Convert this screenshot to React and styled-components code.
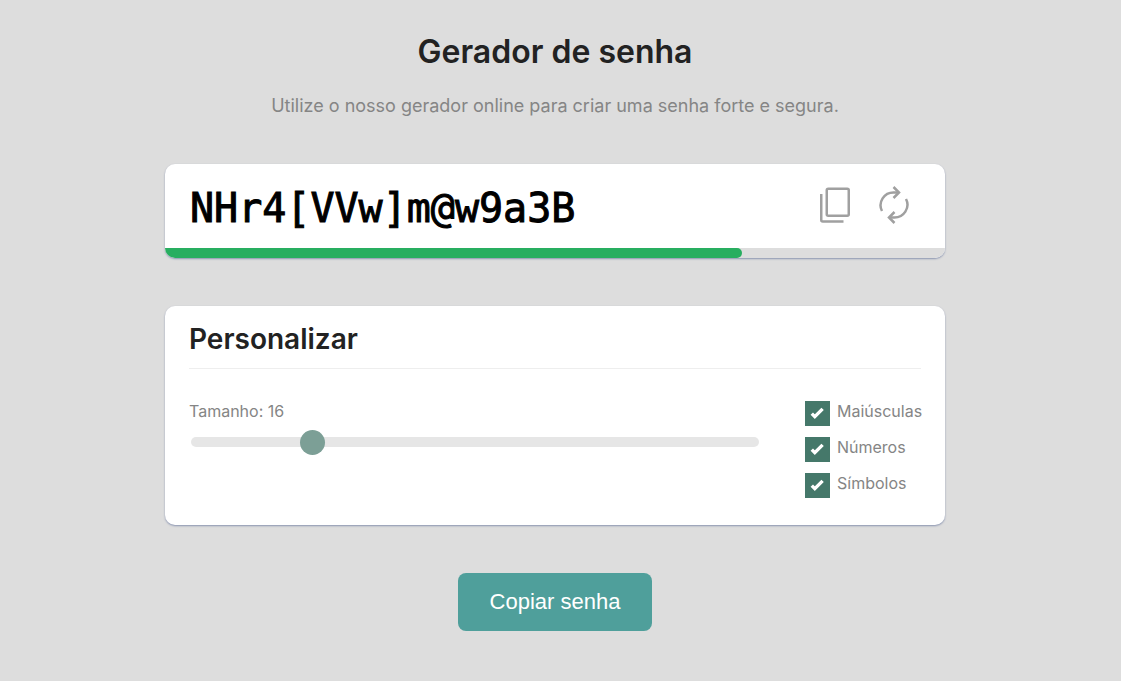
import React, { useState } from "react";
import styled, { createGlobalStyle } from "styled-components";

const GlobalStyle = createGlobalStyle`
  *, *::before, *::after { box-sizing: border-box; }
  body {
    margin: 0;
    background: #dddddd;
    color: #858585;
    font-family: Inter, "Liberation Sans", sans-serif;
  }
`;

const Page = styled.main`
  display: flex;
  flex-direction: column;
  align-items: center;
  padding: 32px 27px 48px 16px;
`;

const Title = styled.h1`
  margin: 0;
  color: #222222;
  font-size: 32px;
  font-weight: 600;
  line-height: 40px;
`;

const Subtitle = styled.p`
  margin: 22px 0 46px;
  font-size: 18px;
  line-height: 24px;
  text-align: center;
`;

const Card = styled.section`
  width: 100%;
  max-width: 780px;
  margin-bottom: 48px;
  overflow: hidden;
  border-radius: 10px;
  background: #ffffff;
  box-shadow: 0 1px 2px #8a94b0;
`;

const PasswordRow = styled.div`
  display: flex;
  align-items: center;
  height: 84px;
  padding: 0 31px 0 25px;
`;

const PasswordInput = styled.input`
  flex: 1;
  min-width: 0;
  padding: 3px 0 0;
  border: 0;
  outline: 0;
  background: transparent;
  color: #000000;
  font-family: "DejaVu Sans Mono", monospace;
  font-size: 40px;
  line-height: 48px;
  -webkit-text-stroke: 1px #000000;
`;

const Actions = styled.div`
  display: flex;
  gap: 19px;
`;

const IconButton = styled.button`
  display: grid;
  place-items: center;
  width: 40px;
  height: 46px;
  padding: 0 0 2px;
  border: 0;
  background: transparent;
  color: #a0a0a0;
  cursor: pointer;
`;

const Strength = styled.div`
  height: 10px;
  background: #dddddd;
`;

const StrengthFill = styled.div`
  height: 100%;
  border-radius: 0 5px 5px 0;
  background: #28ae60;
`;

const Settings = styled.div`
  padding: 16px 24px 27px;
`;

const SettingsTitle = styled.h2`
  margin: 0;
  padding-bottom: 12px;
  border-bottom: 1px solid #eeeeee;
  color: #222222;
  font-size: 28px;
  font-weight: 600;
  line-height: 34px;
`;

const Options = styled.div`
  display: flex;
  gap: 44px;
  padding-top: 32px;
`;

const LengthField = styled.div`
  flex: 1;
  display: flex;
  flex-direction: column;
  gap: 8px;
`;

const LengthLabel = styled.label`
  font-size: 16px;
  line-height: 20px;
`;

const Slider = styled.input`
  appearance: none;
  width: calc(100% - 4px);
  height: 10px;
  margin: 8px 2px;
  border-radius: 5px;
  outline: 0;
  background: #e6e6e6;

  &::-webkit-slider-thumb {
    appearance: none;
    width: 25px;
    height: 25px;
    border-radius: 50%;
    background: #7c9f96;
    cursor: pointer;
  }
`;

const CheckList = styled.div`
  flex: 0 0 116px;
  min-width: 0;
  display: flex;
  flex-direction: column;
  gap: 11px;
`;

const CheckLabel = styled.label`
  display: flex;
  gap: 7px;
  height: 25px;
  font-size: 16px;
  line-height: 20px;
  cursor: pointer;
`;

const CheckBox = styled.span`
  display: grid;
  flex-shrink: 0;
  width: 25px;
  height: 25px;

  & > * {
    grid-area: 1 / 1;
    place-self: center;
  }

  svg {
    pointer-events: none;
  }
`;

const CheckInput = styled.input`
  appearance: none;
  width: 25px;
  height: 25px;
  margin: 0;
  background: #eeeeee;

  &:checked {
    background: #45786a;
  }
`;

const CopyButton = styled.button`
  padding: 16px 32px;
  border: 0;
  border-radius: 8px;
  background: #4f9f9b;
  color: #ffffff;
  font-family: "Liberation Sans", Arial, sans-serif;
  font-size: 22px;
  line-height: 26px;
  cursor: pointer;
`;

const CopyIcon = () => (
  <svg width="30" height="36" viewBox="0 0 30 36" fill="none" stroke="currentColor" strokeWidth="2.5" aria-hidden="true">
    <rect x="6.75" y="1.75" width="22" height="27" rx="1.5" />
    <path d="M1.25 7V33Q1.25 34.5 2.75 34.5H23.5" />
  </svg>
);

const RefreshIcon = () => (
  <svg width="30" height="38" viewBox="0 0 30 38" fill="none" stroke="currentColor" strokeWidth="2.5" aria-hidden="true">
    <path d="M3 25A13 12.75 0 0 1 15 6.5H20" />
    <path d="M14.5 1L20 6.5L14.5 12" />
    <path d="M27 13A13 12.75 0 0 1 15 31.5H10" />
    <path d="M15.5 26L10 31.5L15.5 37" />
  </svg>
);

const CheckIcon = () => (
  <svg width="15" height="13" viewBox="0 0 15 13" fill="none" stroke="#ffffff" strokeWidth="3.4" aria-hidden="true">
    <path d="M1.8 6.6L4.8 9.6L12.6 1.9" />
  </svg>
);

const CheckOption = ({ label }) => (
  <CheckLabel>
    <CheckBox>
      <CheckInput type="checkbox" defaultChecked />
      <CheckIcon />
    </CheckBox>
    {label}
  </CheckLabel>
);

export default function App() {
  const [length, setLength] = useState(16);
  const strength = 74;

  return (
    <>
      <GlobalStyle />
      <Page>
        <Title>Gerador de senha</Title>
        <Subtitle>Utilize o nosso gerador online para criar uma senha forte e segura.</Subtitle>
        <Card>
          <PasswordRow>
            <PasswordInput type="text" readOnly aria-label="Senha" value="NHr4[VVw]m@w9a3B" />
            <Actions>
              <IconButton type="button" aria-label="Copiar">
                <CopyIcon />
              </IconButton>
              <IconButton type="button" aria-label="Gerar nova senha">
                <RefreshIcon />
              </IconButton>
            </Actions>
          </PasswordRow>
          <Strength>
            <StrengthFill style={{ width: `${strength}%` }} />
          </Strength>
        </Card>
        <Card>
          <Settings>
            <SettingsTitle>Personalizar</SettingsTitle>
            <Options>
              <LengthField>
                <LengthLabel htmlFor="length">Tamanho: {length}</LengthLabel>
                <Slider
                  id="length"
                  type="range"
                  min="4"
                  max="64"
                  value={length}
                  onChange={(event) => setLength(Number(event.target.value))}
                />
              </LengthField>
              <CheckList>
                <CheckOption label="Maiúsculas" />
                <CheckOption label="Números" />
                <CheckOption label="Símbolos" />
              </CheckList>
            </Options>
          </Settings>
        </Card>
        <CopyButton type="button">Copiar senha</CopyButton>
      </Page>
    </>
  );
}
